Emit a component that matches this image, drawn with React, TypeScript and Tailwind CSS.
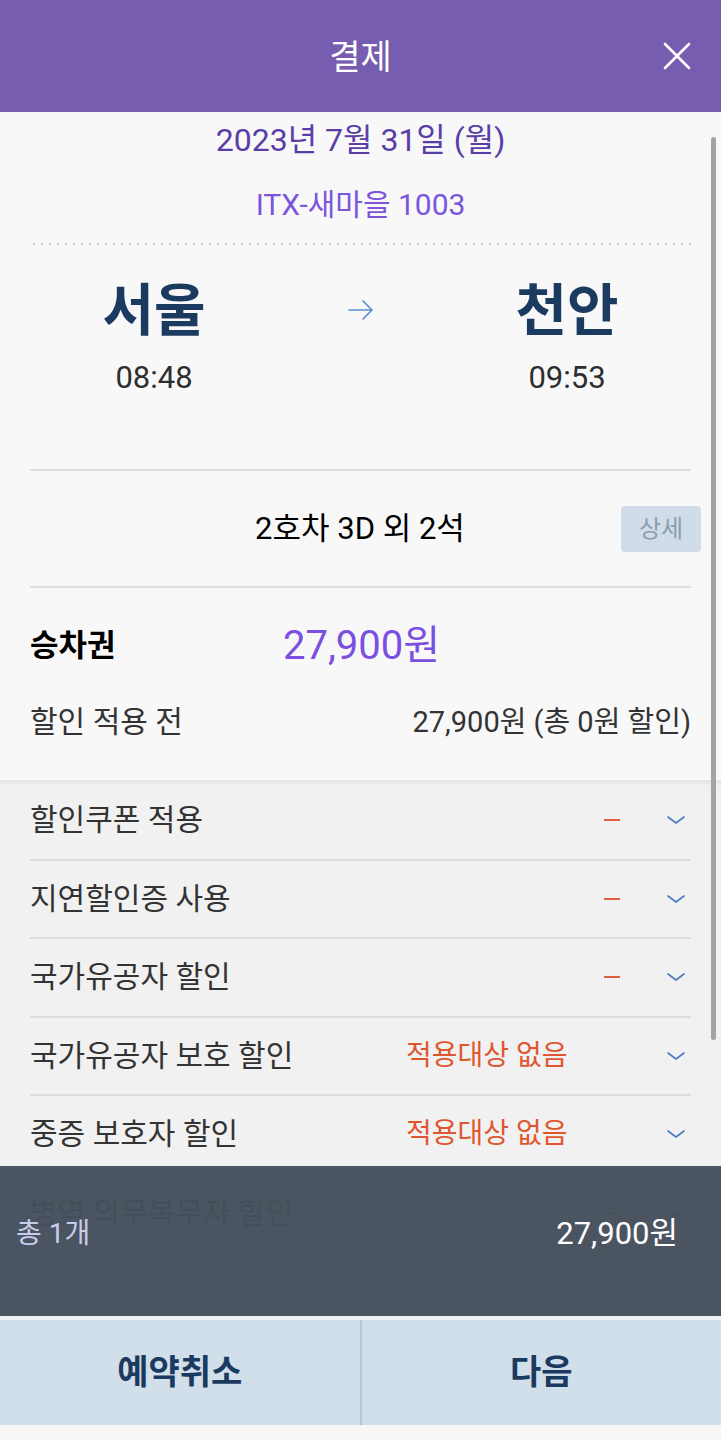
import React from "react";

const rows: { label: string; value: "dash" | "none" }[] = [
  { label: "할인쿠폰 적용", value: "dash" },
  { label: "지연할인증 사용", value: "dash" },
  { label: "국가유공자 할인", value: "dash" },
  { label: "국가유공자 보호 할인", value: "none" },
  { label: "중증 보호자 할인", value: "none" },
  { label: "병역 의무복무자 할인", value: "dash" },
];

function Chevron() {
  return (
    <svg width="18" height="10" viewBox="0 0 18 10" fill="none">
      <path d="M1 2 L9 8 L17 2" stroke="#4a7bc2" strokeWidth="1.6" strokeLinecap="round" strokeLinejoin="round" />
    </svg>
  );
}

export default function App() {
  return (
    <div className="w-[721px] h-[1440px] flex flex-col overflow-hidden bg-[#f7f7f8] font-['Roboto','Noto_Sans_CJK_KR',sans-serif]">
      {/* Header */}
      <div className="h-[112px] shrink-0 bg-[#765db0] grid grid-cols-[1fr_auto_1fr] items-center">
        <div />
        <div className="text-white text-[34px] leading-[40px] pt-[2px]">결제</div>
        <div className="flex justify-end pr-[30px]">
          <svg width="28" height="28" viewBox="0 0 28 28" fill="none">
            <path d="M2 2 L26 26 M26 2 L2 26" stroke="white" strokeWidth="2.6" strokeLinecap="round" />
          </svg>
        </div>
      </div>

      {/* Scroll area */}
      <div className="relative flex-1 overflow-hidden">
        <div className="flex flex-col">
          <div className="bg-[#f8f8f8] flex flex-col">
            <div className="pt-[12px] text-center text-[#5a3ea8] text-[32px] leading-[32px]">2023년 7월 31일 (월)</div>
            <div className="mt-[34px] text-center text-[#7d55dc] text-[30px] leading-[30px]">ITX-새마을 1003</div>
            <div className="mx-[30px] mt-[23px] h-[2px] bg-[radial-gradient(circle,#c4c4c4_1px,transparent_1.3px)] bg-[length:8px_2px]" />

            <div className="mt-[36px] px-[54px] grid grid-cols-[200px_1fr_200px]">
              <div className="flex flex-col items-center">
                <div className="text-[56px] leading-[60px] font-bold text-[#1b3a5f]">서울</div>
                <div className="mt-[21px] text-[31px] leading-[32px] text-[#2e2e2e]">08:48</div>
              </div>
              <div className="flex justify-center pt-[18px]">
                <svg width="26" height="22" viewBox="0 0 26 22" fill="none">
                  <path d="M1 11 H24 M15 2 L24 11 L15 20" stroke="#5b8fcc" strokeWidth="1.7" strokeLinecap="round" strokeLinejoin="round" />
                </svg>
              </div>
              <div className="flex flex-col items-center">
                <div className="text-[56px] leading-[60px] font-bold text-[#1b3a5f]">천안</div>
                <div className="mt-[21px] text-[31px] leading-[32px] text-[#2e2e2e]">09:53</div>
              </div>
            </div>

            <div className="mx-[30px] mt-[75px] h-[2px] bg-[#dedede]" />

            <div className="h-[115px] pl-[19px] pr-[20px] grid grid-cols-[1fr_auto_1fr] items-center">
              <div />
              <div className="text-[31px] leading-[32px] text-black">2호차 3D 외 2석</div>
              <div className="flex justify-end">
                <div className="w-[80px] h-[46px] rounded-[4px] bg-[#d0dde9] flex items-center justify-center text-[24px] text-[#8c9db0]">상세</div>
              </div>
            </div>

            <div className="mx-[30px] h-[2px] bg-[#dedede]" />

            <div className="px-[30px] pt-[36px] flex items-center">
              <div className="w-[253px] text-[31px] leading-[44px] font-bold text-black">승차권</div>
              <div className="text-[40px] leading-[44px] text-[#7b4fe0]">27,900원</div>
            </div>
            <div className="px-[30px] mt-[38px] pb-[42px] flex items-center justify-between text-[#333]">
              <div className="text-[30px] leading-[32px]">할인 적용 전</div>
              <div className="text-[29px] leading-[32px]">27,900원 (총 0원 할인)</div>
            </div>
          </div>

          <div className="bg-[#f1f1f1] border-t-2 border-[#e6e6e6] shadow-[inset_0_2px_2px_rgba(0,0,0,0.04)]">
            {rows.map((r) => (
              <div key={r.label} className="mx-[30px] h-[78.5px] border-b-2 border-[#dcdcdc] flex items-center">
                <div className="w-[376px] text-[30px] leading-[32px] text-[#333]">{r.label}</div>
                <div className="flex-1 flex items-center">
                  {r.value === "dash" ? (
                    <div className="ml-auto mr-[47px] w-[16px] h-[2px] bg-[#e0603a]" />
                  ) : (
                    <div className="text-[28px] leading-[32px] text-[#e0562f]">적용대상 없음</div>
                  )}
                </div>
                <div className="mr-[6px] flex items-center">
                  <Chevron />
                </div>
              </div>
            ))}
          </div>
        </div>

        {/* Scrollbar */}
        <div className="absolute right-[5px] top-[25px] w-[5px] h-[903px] rounded-full bg-[#a3a3a3]" />

        {/* Total overlay */}
        <div className="absolute left-0 right-0 bottom-[4px] h-[150px] bg-[#45505c]/[0.97] flex items-start justify-between pt-[50px] pl-[16px] pr-[43px]">
          <div className="text-[28px] leading-[36px] text-[#c8cbea]">총 1개</div>
          <div className="text-[31px] leading-[36px] text-white">27,900원</div>
        </div>
        <div className="absolute left-0 right-0 bottom-0 h-[4px] bg-[#eef0f2]" />
      </div>

      {/* Buttons */}
      <div className="h-[105px] shrink-0 bg-[#d1dfeb] grid grid-cols-[1fr_2px_1fr]">
        <div className="flex items-center justify-center text-[34px] font-bold text-[#1b3a5f]">예약취소</div>
        <div className="bg-[#b9c5d0]" />
        <div className="flex items-center justify-center text-[34px] font-bold text-[#1b3a5f]">다음</div>
      </div>
      <div className="h-[15px] shrink-0 bg-[#f7f7f7]" />
    </div>
  );
}
